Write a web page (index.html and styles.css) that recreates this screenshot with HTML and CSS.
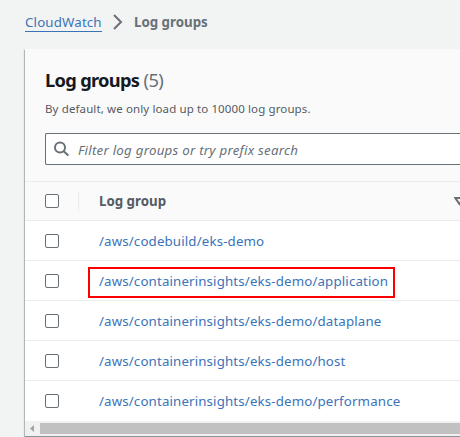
FILE: index.html
```html
<!DOCTYPE html>
<html lang="en">
<head>
<meta charset="utf-8">
<title>Log groups</title>
<link rel="stylesheet" href="styles.css">
</head>
<body>
<nav class="crumbs">
  <a class="crumb-link" href="#">CloudWatch</a>
  <svg class="chevron" width="10" height="16" viewBox="0 0 10 16"><path d="M1 1l7 7-7 7" fill="none" stroke="#687078" stroke-width="2"/></svg>
  <span class="crumb-current">Log groups</span>
</nav>
<main class="card">
  <header class="head">
    <h1 class="title">Log groups <span class="count">(5)</span></h1>
    <p class="desc">By default, we only load up to 10000 log groups.</p>
    <div class="search">
      <svg class="glass" width="16" height="16" viewBox="0 0 16 16" fill="none" stroke="#687078" stroke-width="2"><circle cx="6" cy="6.5" r="5"/><path d="M9.7 10.2l4.6 4.3"/></svg>
      <span class="placeholder">Filter log groups or try prefix search</span>
    </div>
  </header>
  <div class="row row-head">
    <span class="box"></span><span class="divider"></span><span class="column">Log group</span>
    <svg class="sort" width="6" height="10" viewBox="0 0 6 10"><path d="M1.3 2h8.4L5.5 8z" fill="none" stroke="#687078" stroke-width="2"/></svg>
  </div>
  <div class="row"><span class="box"></span><a class="link" href="#">/aws/codebuild/eks-demo</a></div>
  <div class="row"><span class="box"></span><a class="link" href="#">/aws/containerinsights/eks-demo/application</a><span class="highlight"></span></div>
  <div class="row"><span class="box"></span><a class="link" href="#">/aws/containerinsights/eks-demo/dataplane</a></div>
  <div class="row"><span class="box"></span><a class="link" href="#">/aws/containerinsights/eks-demo/host</a></div>
  <div class="row"><span class="box"></span><a class="link" href="#">/aws/containerinsights/eks-demo/performance</a></div>
  <div class="scrollbar">
    <svg width="15" height="15" viewBox="0 0 15 15"><path d="M9 4v7L5 7.5z" fill="#a3a3a3"/></svg>
    <span class="thumb"></span>
  </div>
</main>
</body>
</html>
```
FILE: styles.css
```css
* { box-sizing: border-box; }
body {
  margin: 0;
  height: 437px;
  overflow: hidden;
  background: #f2f3f3;
  font-family: "Noto Sans", sans-serif;
  font-size: 13.3px;
  color: #545b64;
}
a { color: #3b73b9; text-decoration: none; }
.crumbs {
  display: flex;
  height: 49px;
  padding: 14px 0 0 25px;
  line-height: 17px;
}
.crumb-link {
  width: 77px;
  height: 18px;
  border-bottom: 1px solid #3b73b9;
  letter-spacing: 0.15px;
  white-space: nowrap;
}
.chevron { margin: 0 11px; }
.crumb-current { font-weight: 700; color: #687078; }
.card {
  height: 387px;
  margin-left: 25px;
  background: #fff;
  box-shadow: 0 1px 1px #879596, -1px 1px 1px #b9bfc1;
}
.head {
  height: 133px;
  padding: 19px 0 0 20px;
  background: #fafafa;
  border-bottom: 1px solid #eaeded;
}
.title {
  margin: 0;
  font-size: 18.3px;
  line-height: 24px;
  letter-spacing: -0.7px;
  color: #16191f;
  white-space: nowrap;
}
.count { font-weight: 400; letter-spacing: -0.5px; color: #687078; }
.desc {
  margin: 8px 0 0;
  font-size: 11.5px;
  line-height: 18px;
  letter-spacing: 0.12px;
}
.search {
  display: flex;
  align-items: center;
  height: 32px;
  margin-top: 15px;
  padding-left: 8px;
  border: 1px solid #687078;
  border-right: 0;
  border-radius: 2px 0 0 2px;
  background: #fff;
}
.placeholder {
  margin: 1px 0 0 8px;
  font-style: italic;
  letter-spacing: 0.24px;
  color: #687078;
  white-space: nowrap;
}
.row {
  position: relative;
  display: flex;
  align-items: center;
  height: 40px;
  padding-left: 20px;
  border-bottom: 1px solid #eaeded;
  white-space: nowrap;
}
.row:nth-last-child(2) { border-bottom: 0; }
.row-head { height: 39px; background: #fafafa; }
.box {
  width: 14px;
  height: 14px;
  border: 1px solid #687078;
  border-radius: 2px;
  background: #fff;
}
.link { margin-left: 40px; letter-spacing: 0.14px; }
.divider { width: 1px; height: 20px; margin: 0 20px 0 19px; background: #eaeded; }
.column { font-weight: 700; }
.sort { margin-left: auto; }
.highlight {
  position: absolute;
  left: 63px;
  top: 6px;
  width: 307px;
  height: 31px;
  border: 2px solid #f00;
}
.scrollbar {
  display: flex;
  align-items: center;
  height: 15px;
  background: #f1f1f1;
}
.thumb { flex: 1; height: 11px; background: #c1c1c1; }
```
